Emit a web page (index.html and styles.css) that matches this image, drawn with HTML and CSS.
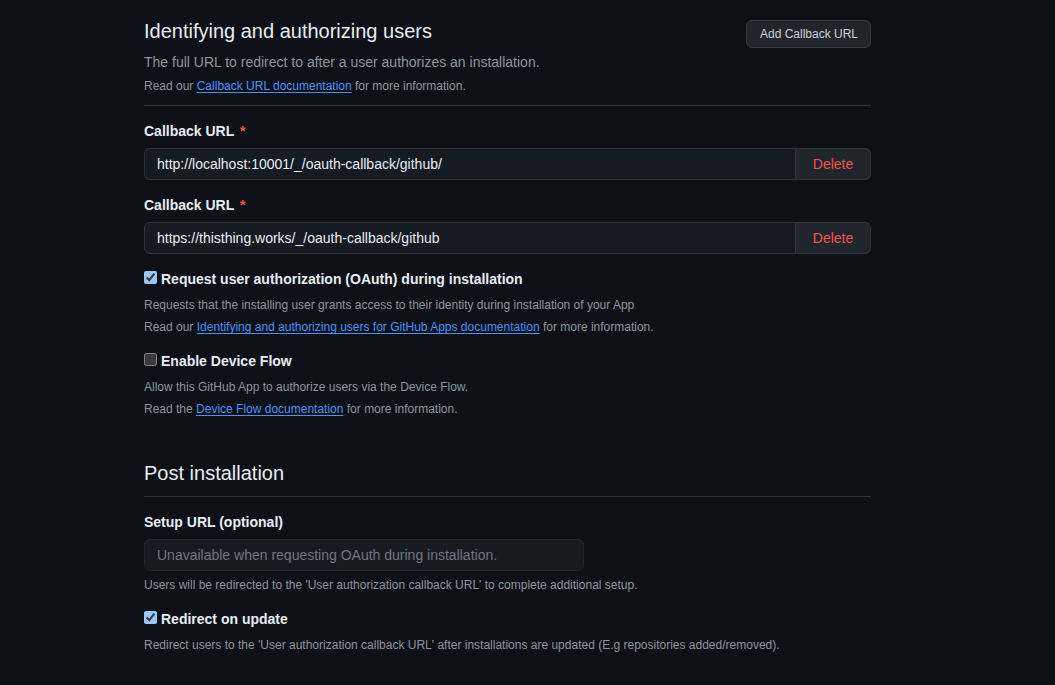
FILE: index.html
```html
<!DOCTYPE html>
<html lang="en">
<head>
<meta charset="utf-8">
<title>GitHub App settings</title>
<link rel="stylesheet" href="styles.css">
</head>
<body>
<main class="page">
  <section class="section">
    <div class="subhead">
      <div class="subhead-main">
        <h2 class="subhead-title">Identifying and authorizing users</h2>
        <p class="subhead-desc">The full URL to redirect to after a user authorizes an installation.</p>
        <p class="note">Read our <a href="#" class="link">Callback URL documentation</a> for more information.</p>
      </div>
      <button class="btn btn-sm" type="button">Add Callback URL</button>
    </div>

    <div class="field">
      <label class="label">Callback URL <span class="req">*</span></label>
      <div class="input-group">
        <input class="input" type="text" value="http://localhost:10001/_/oauth-callback/github/">
        <button class="btn-delete" type="button">Delete</button>
      </div>
    </div>

    <div class="field">
      <label class="label">Callback URL <span class="req">*</span></label>
      <div class="input-group">
        <input class="input" type="text" value="https://thisthing.works/_/oauth-callback/github">
        <button class="btn-delete" type="button">Delete</button>
      </div>
    </div>

    <div class="check-field">
      <label class="check-label"><input type="checkbox" class="checkbox" checked>Request user authorization (OAuth) during installation</label>
      <p class="note first">Requests that the installing user grants access to their identity during installation of your App</p>
      <p class="note">Read our <a href="#" class="link">Identifying and authorizing users for GitHub Apps documentation</a> for more information.</p>
    </div>

    <div class="check-field">
      <label class="check-label"><input type="checkbox" class="checkbox">Enable Device Flow</label>
      <p class="note first">Allow this GitHub App to authorize users via the Device Flow.</p>
      <p class="note">Read the <a href="#" class="link">Device Flow documentation</a> for more information.</p>
    </div>
  </section>

  <section class="section section-post">
    <div class="subhead subhead-simple">
      <h2 class="subhead-title">Post installation</h2>
    </div>

    <div class="field">
      <label class="label">Setup URL (optional)</label>
      <input class="input input-disabled" type="text" placeholder="Unavailable when requesting OAuth during installation." disabled>
      <p class="note help">Users will be redirected to the 'User authorization callback URL' to complete additional setup.</p>
    </div>

    <div class="check-field">
      <label class="check-label"><input type="checkbox" class="checkbox" checked>Redirect on update</label>
      <p class="note first">Redirect users to the 'User authorization callback URL' after installations are updated (E.g repositories added/removed).</p>
    </div>
  </section>
</main>
</body>
</html>
```

FILE: styles.css
```css
html, body {
  margin: 0;
  padding: 0;
  background: #0d1117;
}

body {
  font-family: "Liberation Sans", Arial, sans-serif;
  color: #e6edf3;
  font-size: 14px;
  line-height: 1.5;
}

.page {
  width: 727px;
  padding-left: 144px;
  padding-top: 16px;
  padding-bottom: 40px;
}

.subhead {
  display: flex;
  justify-content: space-between;
  align-items: flex-start;
  border-bottom: 1px solid #30363d;
  padding-bottom: 10px;
}

.subhead-simple {
  padding-bottom: 8px;
}

.subhead-title {
  margin: 0;
  font-size: 20px;
  line-height: 30px;
  font-weight: 400;
  color: #e6edf3;
}

.subhead-desc {
  margin: 6px 0 0;
  font-size: 14px;
  line-height: 21px;
  color: #8b949e;
}

.note {
  margin: 4px 0 0;
  font-size: 12px;
  line-height: 18px;
  color: #8b949e;
}

.note.first {
  margin-top: 6px;
}

.note.help {
  margin-top: 5px;
}

.link {
  color: #4493f8;
  text-decoration: underline;
  text-underline-offset: 2px;
}

.btn {
  font-family: inherit;
  background: #21262d;
  color: #c9d1d9;
  border: 1px solid #363b42;
  border-radius: 6px;
  cursor: pointer;
}

.btn-sm {
  margin-top: 4px;
  height: 28px;
  padding: 0 12px 0 13px;
  font-size: 12px;
  line-height: 26px;
}

.field {
  margin-top: 15px;
}

.label {
  display: block;
  font-weight: 700;
  font-size: 14px;
  line-height: 21px;
  color: #e6edf3;
  margin-bottom: 6px;
}

.req {
  color: #f85149;
  margin-left: 2px;
}

.input-group {
  display: flex;
  width: 727px;
}

.input {
  box-sizing: border-box;
  height: 32px;
  padding: 0 12px;
  font-family: inherit;
  font-size: 14px;
  color: #e6edf3;
  background: #151b23;
  border: 1px solid #30363d;
  border-radius: 6px;
  outline: none;
}

.input-group .input {
  flex: 1;
  border-radius: 6px 0 0 6px;
}

.btn-delete {
  box-sizing: border-box;
  width: 75px;
  height: 32px;
  font-family: inherit;
  font-size: 14px;
  color: #f85149;
  background: #21262d;
  border: 1px solid #30363d;
  border-left: none;
  border-radius: 0 6px 6px 0;
  cursor: pointer;
}

.input-disabled {
  display: block;
  width: 440px;
  background: #161b22;
  border-color: #21262d;
  color: #6e7681;
}

.input-disabled::placeholder {
  color: #6e7681;
}

.check-field {
  margin-top: 15px;
}

.check-label {
  display: block;
  font-weight: 700;
  font-size: 14px;
  line-height: 21px;
  color: #e6edf3;
}

.checkbox {
  color-scheme: dark;
  margin: 0 4px 0 0;
  width: 13px;
  height: 13px;
}

.section-post {
  margin-top: 40px;
}
```
